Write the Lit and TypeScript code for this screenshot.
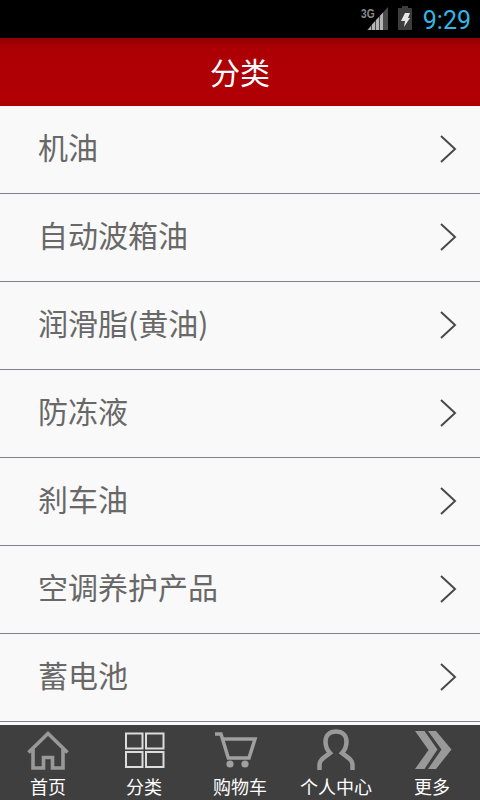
import { LitElement, html, css, svg } from "lit";
import { customElement } from "lit/decorators.js";

const items = ["机油", "自动波箱油", "润滑脂(黄油)", "防冻液", "刹车油", "空调养护产品", "蓄电池"];

const tabs = [
  {
    label: "首页",
    icon: svg`<path d="M8.5 25.5 L28 6.5 L47.5 25.5 M13 22 V41 H23.5 V30.5 H32.5 V41 H43 V22" fill="none" stroke="#999" stroke-width="3.6"/>`,
  },
  {
    label: "分类",
    icon: svg`<g fill="none" stroke="#dcdcdc" stroke-width="2"><rect x="10" y="6.5" width="16.5" height="15"/><rect x="30" y="6.5" width="17.5" height="15"/><rect x="10" y="25" width="16.5" height="15"/><rect x="30" y="25" width="17.5" height="15"/></g>`,
  },
  {
    label: "购物车",
    icon: svg`<path d="M3 7 H9 L16.3 31 H37 L43 12 H11" fill="none" stroke="#a0a0a0" stroke-width="3.5"/><circle cx="18" cy="37" r="3.6" fill="#a0a0a0"/><circle cx="33" cy="37" r="3.6" fill="#a0a0a0"/>`,
  },
  {
    label: "个人中心",
    icon: svg`<path d="M11.5 43 V38 C11.5 33 15 31.5 22 26 C19 23 17.5 18 17.5 14.5 C17.5 8 22 4.5 28 4.5 C34 4.5 38.5 8 38.5 14.5 C38.5 18 37 23 34 26 C41 31.5 44.5 33 44.5 38 V43" fill="none" stroke="#999" stroke-width="4.5"/>`,
  },
  {
    label: "更多",
    icon: svg`<path d="M11 4 H20.5 L33.5 22.5 L20.5 42 H11 L24.5 23 Z M24 4 H32 L47.5 22.5 L32 42 H24 L37.5 22.5 Z" fill="#999"/>`,
  },
];

@customElement("app-root")
export class AppRoot extends LitElement {
  static styles = css`
    :host {
      display: flex;
      flex-direction: column;
      width: 480px;
      height: 800px;
      overflow: hidden;
      background: #f9f9f9;
      font-family: "Noto Sans CJK SC", "Liberation Sans", sans-serif;
    }
    .status {
      height: 38px;
      flex: none;
      background: #000;
      display: flex;
      align-items: center;
      justify-content: flex-end;
      padding-right: 9px;
      box-sizing: border-box;
    }
    .net {
      width: 28px;
      height: 26px;
      display: block;
      margin-right: 9px;
    }
    .batt {
      width: 16px;
      height: 26px;
      display: block;
      margin-right: 10px;
    }
    .time {
      font-family: "Roboto", sans-serif;
      font-size: 25px;
      line-height: 38px;
      padding-top: 3px;
      color: #33b5e5;
    }
    .header {
      height: 68px;
      flex: none;
      box-sizing: border-box;
      padding-bottom: 3px;
      background: linear-gradient(#900000 0, #ad0005 10px, #b00006 100%);
      color: #fff;
      font-size: 30px;
      display: flex;
      align-items: center;
      justify-content: center;
    }
    .list {
      flex: 1;
      min-height: 0;
      overflow: hidden;
    }
    .row {
      height: 88px;
      box-sizing: border-box;
      border-bottom: 1px solid #84818a;
      display: flex;
      align-items: center;
      justify-content: space-between;
      padding: 0 22px 2px 39px;
      color: #686868;
      font-size: 30px;
    }
    .row span {
      margin-bottom: 6px;
      margin-left: -1px;
    }
    .chev {
      width: 19px;
      height: 30px;
      display: block;
    }
    .tabbar {
      height: 75px;
      flex: none;
      background: #3f3f3f;
      display: grid;
      grid-template-columns: repeat(5, 1fr);
    }
    .tab {
      display: flex;
      flex-direction: column;
      align-items: center;
      color: #fff;
      font-size: 18px;
      line-height: 22px;
    }
    .tab svg {
      width: 56px;
      height: 48px;
      display: block;
      margin-top: 2px;
    }
  `;

  render() {
    return html`
      <div class="status">
        <svg class="net" viewBox="0 0 28 26">
          <text x="1" y="11.5" font-family="Liberation Sans" font-size="13" font-weight="700" textLength="13.5" lengthAdjust="spacingAndGlyphs" fill="#8a8a8a">3G</text>
          <path d="M7 24 L28 1 V24 Z" fill="#4a4a4a"/>
          <path d="M8 24 L11 20 V24 Z M12 24 V18.5 L15 15.2 V24 Z M16 24 V14 L19 10.9 V24 Z M20 24 V9.8 L23 6.5 V24 Z" fill="#b5b5b5"/>
        </svg>
        <svg class="batt" viewBox="0 0 16 26">
          <path d="M5 0 H11 V2 H15 V24 H1 V2 H5 Z" fill="#3d3d3d"/>
          <path d="M8 7 H13 L11 12 H13 L7 21 L8 15 H4 Z" fill="#e6e6e6"/>
        </svg>
        <span class="time">9:29</span>
      </div>
      <div class="header">分类</div>
      <div class="list">
        ${items.map(
          (t) => html`<div class="row">
            <span>${t}</span>
            <svg class="chev" viewBox="0 0 19 30">
              <path d="M2 2 L16 15 L2 28" fill="none" stroke="#4a4a4a" stroke-width="2"/>
            </svg>
          </div>`
        )}
      </div>
      <div class="tabbar">
        ${tabs.map(
          (t) => html`<div class="tab">
            <svg viewBox="0 0 56 48">${t.icon}</svg>
            <span>${t.label}</span>
          </div>`
        )}
      </div>
    `;
  }
}
